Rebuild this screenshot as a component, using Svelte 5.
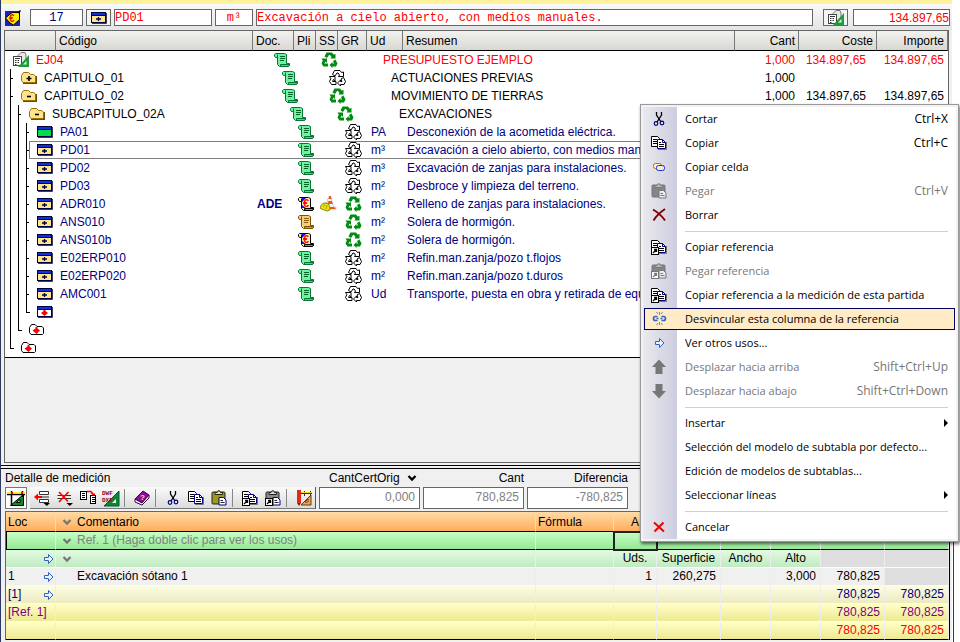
<script lang="ts">
	type Row = {
		level: number;
		icon: string;
		code?: string;
		doc?: string;
		pli?: string;
		ss?: string;
		gr?: string;
		ud?: string;
		text?: string;
		nums?: string[];
	};

	const scroll = (fill: string, roll: string, stroke: string, extra: string) =>
		`<g transform="translate(0 1)"><path d="M1.5 .5H10.5L12.5 1.5V10.5H15.5V12.5L14 13.5H5.5L3.5 11.5V4.5H1.5L.5 3V1.5Z" fill="${fill}" stroke="${stroke}"/>
		<path d="M6.5 13.5V11.5H15.5V12.5L14 13.5Z" fill="${roll}" stroke="${stroke}"/><path d="M3.5 1.5V4.5" stroke="${stroke}"/>${extra}</g>`;

	const lines = (color: string) => `<path d="M6 3.5H11M6 5.5H11M6 7.5H10" stroke="${color}"/>`;

	const recycle = (fill: string, stroke: string) =>
		`<g fill="${fill}" stroke="${stroke}"><path d="M3.5 4.5L5.5 .5H11L12.5 2.5L14.5 2V6.5H9.5L10.5 5L9 3H8L6 6Z"/>
		<path d="M.5 6.5H6V11L4.5 9.5L3.5 11.5H7V14.5H2.5L.5 11.5L1.8 8.5Z"/>
		<path d="M12 9L14.5 7.5L16.5 11.5L15 14.5H11.5V16L8.5 13L11.5 10V11.5H13Z"/></g>`;

	const folder = (sign: string) =>
		`<path d="M2 13H15V6" fill="none" stroke="#6b4d00" stroke-width="2"/><path d="M.5 10.5V5.5L2.5 2.5H7.5L9.5 4.5H12.5L14.5 6V12L13.5 12.5H2Z" fill="#fde58d" stroke="#a27000"/><path d="${sign}" stroke="#000" stroke-width="1.6"/>`;

	const win = (body: string, mark: string) =>
		`<path d="M1 13.5H15.5V3" fill="none" stroke="#3b3b60"/><rect x=".5" y="2.5" width="14" height="10" fill="${body}" stroke="#00003c"/>
		<rect x="1" y="3" width="13" height="3" fill="#0a34e0"/><path d="M1 5.5H14" stroke="#000070"/>${mark}`;

	const pages =
		'<path d="M.5 1.5H6.5L8.5 3.5V11.5H.5Z" fill="#fff" stroke="#000"/><path d="M2 4.5H6M2 6.5H6M2 8.5H6" stroke="#000"/><path d="M7 14.5H15.5V7" fill="none" stroke="#777"/><path d="M6.5 4.5H11.5L14.5 7.5V13.5H6.5Z" fill="#fff" stroke="#000080"/><path d="M11.5 4.5V7.5H14.5" fill="none" stroke="#000080"/><path d="M8 7.5H10M8 9.5H13M8 11.5H13" stroke="#000"/>';
	const clip = (board: string, metal: string, ink: string, page: string) =>
		`<rect x="1" y="2" width="13" height="12" rx="1" fill="${board}" stroke="${ink}"/><path d="M4 4.5V2.5H6L7 .8H8.5L9.5 2.5H11.5V4.5Z" fill="${metal}" stroke="${ink}"/>
		<path d="M8 7.5H12.5L15 10V15H8Z" fill="${page}" stroke="${ink === '#777' ? '#777' : '#000080'}"/><path d="M9.5 10.5H12M9.5 12.5H13.5" stroke="${ink}"/>`;
	const shortcut = (ink: string) =>
		`<rect x=".5" y="8.5" width="7" height="7" fill="#fff" stroke="${ink}"/><path d="M2 14L5.5 10.5M3 10.5H5.5V13" fill="none" stroke="${ink}" stroke-width="1.3"/>`;

	const icons: { [key: string]: string } = {
		scroll: scroll('#6df59d', '#58d158', '#057535', lines('#046328')),
		tan: scroll('#f3cf7d', '#c99a3d', '#7d5200', lines('#8a5d0b')),
		euro: scroll(
			'#fff2a8',
			'#a99b20',
			'#000',
			'<path d="M4 1H8L4 5ZM4 8V11H8Z" fill="#1111e0"/><text x="5" y="10" font-size="11" font-weight="700" font-family="Liberation Sans, sans-serif" fill="#f00">€</text>'
		),
		helmet:
			'<path d="M8 2H11L13.5 11H16V13H6V11Z" fill="#f4f4f4" stroke="#999" stroke-width=".5"/><path d="M9 0H11L11.6 3H8.6ZM8.4 5H12L12.7 8H7.7ZM6 11H14L16 13H6Z" fill="#f05a10"/><path d="M.5 12.5C0 9 3 6.500 6 7C9 7.500 10 10 10 14L7 15Z" fill="#ece414" stroke="#8f8600"/><path d="M3 11L5 8M6 13L7 9" stroke="#a39b00"/>',
		recycle: recycle('#008c10', 'none'),
		recycleOff: recycle('#fff', '#000'),
		plus: folder('M5.500 8.500H10.500M8 6V11'),
		minus: folder('M6 8.500H10'),
		item: win('#ffe48c', '<path d="M5 9H10M7.500 7V11" stroke="#000040" stroke-width="1.300"/>'),
		green: win('#00dc4c', ''),
		newItem: win('#fff', '<path d="M4 9L6.500 7V6H8.500V7L11 9L7.500 12Z" fill="#f00"/>'),
		newFolder:
			'<path d="M.5 10.500V5.500L2.500 2.500H6L8 4.500H13L14.500 6V11.500L13.500 12.500H2Z" fill="#fff" stroke="#000"/><path d="M3.500 8.500L6.500 6.500V5H8.500V6.500L11 8.500L7.500 12Z" fill="#f00"/>',
		calc: '<path d="M5 3.500L8 .5H12L13 3V11H5Z" fill="#e8e8e8" stroke="#777"/><rect x=".5" y="4.500" width="8" height="9" fill="#fff" stroke="#444"/><path d="M2 6.500H7M2 8.500H3.500M4.500 8.500H6M2 10.500H3.500M4.500 10.500H6M2 12.500H3.500" stroke="#333"/><path d="M16 3V15H5Z" fill="#1e9b3c"/><path d="M13.500 9V12.500H10Z" fill="#e6f5e6"/>',
		tag: '<rect y="1" width="15" height="15" fill="#1a20b8"/><path d="M.5 8L7 2.500H14.500V9.500L8.500 15L5 13Z" fill="#ffee00" stroke="#000"/><path d="M13 3L15.500 .5" stroke="#000" stroke-width="1.500"/><text x="4" y="12" font-size="10" font-weight="700" font-family="Liberation Sans, sans-serif" fill="#e02000">€</text>',
		cut: '<path d="M5.500 1V4L10 11M10.500 1V4L6 11" fill="none" stroke="#000" stroke-width="1.300"/><circle cx="5" cy="12.500" r="1.800" fill="none" stroke="#000080" stroke-width="1.200"/><circle cx="11" cy="12" r="1.800" fill="none" stroke="#000080" stroke-width="1.200"/>',
		copy: pages,
		cell: '<rect x="2.500" y="4.500" width="8" height="5" rx="2" fill="#fff4d0" stroke="#a97500"/><rect x="5.500" y="6.500" width="8" height="5" rx="2" fill="#fbe6dc" stroke="#1030d8"/>',
		paste: clip('#9c9a1c', '#f4e56c', '#222', '#fff'),
		pasteOff: clip('#858585', '#b9b9b9', '#777', '#ececf2'),
		pasteGrey: clip('#8a8a86', '#d8d8d0', '#222', '#fff') + shortcut('#000'),
		remove: '<path d="M2 2.500C7 5.500 11 9 14 13.500M14 2C9 5.500 5 9 2.500 13.500" fill="none" stroke="#800000" stroke-width="1.900"/>',
		copyRef: pages + shortcut('#000'),
		pasteRefOff: clip('#858585', '#b9b9b9', '#777', '#ececf2') + shortcut('#777'),
		unlink:
			'<path d="M6.500 5.500H4.500Q2.500 5.500 2.500 7.500T4.500 9.500H6.500M10.500 5.500H12.500Q14.500 5.500 14.500 7.500T12.500 9.500H10.500M5.500 7.500H7.500M9.500 7.500H11.500" fill="none" stroke="#2f66c8" stroke-width="1.700"/><path d="M8.500 1V4M5.500 1L7 3M11.500 1L10 3M8.500 11V14M5.500 14L7 12M11.500 14L10 12" stroke="#888"/>',
		next: '<path d="M4.500 6.500H8.500V3.500L13 8L8.500 12.500V9.500H4.500Z" fill="#eef4ff" stroke="#2f62c4"/>',
		up: '<path d="M8 .5L15 8H11.500V15H4.500V8H1Z" fill="#777"/>',
		down: '<path d="M8 15.500L15 8H11.500V1H4.500V8H1Z" fill="#777"/>',
		cancel: '<path d="M3 3.500L13 12.500M12.500 3.500L3.500 12.500" stroke="#f00000" stroke-width="2"/>',
		insertRow:
			'<path d="M5.500 1.500H14.500V4.500H5.500ZM5.500 9.500H14.500V12.500H5.500Z" fill="#fff" stroke="#333"/><path d="M7 7H15" stroke="#333"/><path d="M0 7L4 3.500V6H8V8H4V10.500Z" fill="#f00"/><path d="M9.500 13H16L12.800 16Z" fill="#000"/>',
		deleteRow:
			'<path d="M.5 5.500H14M.5 8.500H14" stroke="#333"/><path d="M2 2L11 11.500M11.500 2L2 12" stroke="#f00" stroke-width="1.600"/><path d="M9.500 13H16L12.800 16Z" fill="#000"/>',
		moveRow:
			'<rect x=".5" y="1.500" width="6" height="8" fill="#fff" stroke="#000"/><path d="M2 3.500H5M2 5.500H5M2 7.500H5" stroke="#000"/><rect x="10.500" y="5.500" width="5" height="8" fill="#fff" stroke="#000"/><path d="M12 7.500H15M12 9.500H15M12 11.500H15" stroke="#000"/><path d="M7 1.500H11L13 4" fill="none" stroke="#f00" stroke-width="1.500"/><path d="M10 3.500H15V6Z" fill="#f00"/>',
		dwf: '<path d="M16 1V16H1Z" fill="#078c2c" stroke="#054"/><path d="M13 9V13H9Z" fill="#fff"/><text x="-1" y="5" font-size="6" font-weight="700" font-family="Liberation Mono, monospace" fill="#900020">DWF</text><text x="-1" y="12" font-size="6" font-weight="700" font-family="Liberation Mono, monospace" fill="#900020">DXF</text>',
		book: '<path d="M1 9L9 1L15 5L8 13Z" fill="#8a0d9b" stroke="#3a0045"/><path d="M1 9L8 13L15 5V8L8 15L1 12Z" fill="#fff" stroke="#3a0045"/><text x="6" y="10" font-size="8" font-weight="700" font-family="Liberation Sans, sans-serif" fill="#ffe600">?</text>',
		ruler:
			'<path d="M15 5V15H5Z" fill="#e5a462" stroke="#6b3800"/><path d="M12 9V12H9Z" fill="#fff" stroke="#6b3800"/><path d="M5 3.500H16M8.500 1V6M14.500 1V6" stroke="#333"/><rect x="1" y="0" width="4" height="13" fill="#e02a1c"/><path d="M1 13H5L3 16Z" fill="#8c1a10"/><path d="M5 2.500H16" stroke="#ffd400"/>',
		chevron: '<path d="M4.500 6L8 9.500L11.500 6" fill="none" stroke="currentColor" stroke-width="2.300"/>',
		square:
			'<path d="M17.500 5.500V16.500H4.500Z" fill="#0c8a22" stroke="#000"/><path d="M14 10.500V13.500H10.500Z" fill="#fff" stroke="#000"/><path d="M1 5.500H19M5.500 2V16M16.500 2V8" stroke="#000" stroke-width="1.500"/><path d="M1 4H19" stroke="#ffe600" stroke-width="1.500"/><path d="M5 4H7M15 4H17" stroke="#f00" stroke-width="2"/>'
	};

	const total = '134.897,65';

	const items: [string, string, string, string, string?][] = [
		['PA01', 'scroll', 'PA', 'Desconexión de la acometida eléctrica.'],
		['PD01', 'scroll', 'm³', 'Excavación a cielo abierto, con medios manuales.'],
		['PD02', 'scroll', 'm³', 'Excavación de zanjas para instalaciones.'],
		['PD03', 'scroll', 'm²', 'Desbroce y limpieza del terreno.'],
		['ADR010', 'euro', 'm³', 'Relleno de zanjas para instalaciones.', 'recycle'],
		['ANS010', 'tan', 'm²', 'Solera de hormigón.', 'recycle'],
		['ANS010b', 'euro', 'm²', 'Solera de hormigón.', 'recycle'],
		['E02ERP010', 'scroll', 'm²', 'Refin.man.zanja/pozo t.flojos'],
		['E02ERP020', 'scroll', 'm²', 'Refin.man.zanja/pozo t.duros'],
		['AMC001', 'scroll', 'Ud', 'Transporte, puesta en obra y retirada de equipo']
	];

	const rows: Row[] = [
		{ level: 0, icon: 'calc', code: 'EJ04', pli: 'scroll', gr: 'recycle', text: 'PRESUPUESTO EJEMPLO', nums: ['1,000', total, total] },
		{ level: 1, icon: 'plus', code: 'CAPITULO_01', pli: 'scroll', gr: 'recycleOff', text: 'ACTUACIONES PREVIAS', nums: ['1,000'] },
		{ level: 1, icon: 'minus', code: 'CAPITULO_02', pli: 'scroll', gr: 'recycle', text: 'MOVIMIENTO DE TIERRAS', nums: ['1,000', total, total] },
		{ level: 2, icon: 'minus', code: 'SUBCAPITULO_02A', pli: 'scroll', gr: 'recycle', text: 'EXCAVACIONES' },
		...items.map(([code, pli, ud, text, gr]) => ({
			level: 3,
			icon: code === 'PA01' ? 'green' : 'item',
			code,
			pli,
			ud,
			text,
			gr: gr ?? 'recycleOff',
			doc: code === 'ADR010' ? 'ADE' : '',
			ss: code === 'ADR010' ? 'helmet' : ''
		})),
		{ level: 3, icon: 'newItem' },
		{ level: 2, icon: 'newFolder' },
		{ level: 1, icon: 'newFolder' }
	];

	const menu: { label?: string; icon?: string; keys?: string; off?: boolean; sub?: boolean }[] = [
		{ label: 'Cortar', icon: 'cut', keys: 'Ctrl+X' },
		{ label: 'Copiar', icon: 'copy', keys: 'Ctrl+C' },
		{ label: 'Copiar celda', icon: 'cell' },
		{ label: 'Pegar', icon: 'pasteOff', keys: 'Ctrl+V', off: true },
		{ label: 'Borrar', icon: 'remove' },
		{},
		{ label: 'Copiar referencia', icon: 'copyRef' },
		{ label: 'Pegar referencia', icon: 'pasteRefOff', off: true },
		{ label: 'Copiar referencia a la medición de esta partida', icon: 'copyRef' },
		{ label: 'Desvincular esta columna de la referencia', icon: 'unlink' },
		{ label: 'Ver otros usos...', icon: 'next' },
		{ label: 'Desplazar hacia arriba', icon: 'up', keys: 'Shift+Ctrl+Up', off: true },
		{ label: 'Desplazar hacia abajo', icon: 'down', keys: 'Shift+Ctrl+Down', off: true },
		{},
		{ label: 'Insertar', sub: true },
		{ label: 'Selección del modelo de subtabla por defecto...' },
		{ label: 'Edición de modelos de subtablas...' },
		{ label: 'Seleccionar líneas', sub: true },
		{},
		{ label: 'Cancelar', icon: 'cancel' }
	];

	const tools = [
		'insertRow', 'deleteRow', 'moveRow', 'dwf', '',
		'book', '',
		'cut', 'copy', 'paste', '',
		'copyRef', 'pasteGrey', '',
		'ruler'
	];

	// empty strings are blank cells, columns run from Fórmula to the right
	const measures = [
		{ cls: 'ref', loc: '', text: 'Ref. 1 (Haga doble clic para ver los usos)', chevron: true, cells: ['', '', '', '', '', '', ''] },
		{ cls: 'titles', loc: '', text: '', arrow: true, chevron: true, cells: ['', 'Uds.', 'Superficie', 'Ancho', 'Alto', '', ''] },
		{ cls: 'line', loc: '1', text: 'Excavación sótano 1', arrow: true, cells: ['', '1', '260,275', '', '3,000', '780,825', ''] },
		{ cls: 'sub navy', loc: '[1]', text: '', arrow: true, cells: ['', '', '', '', '', '780,825', '780,825'] },
		{ cls: 'sum purple', loc: '[Ref. 1]', text: '', cells: ['', '', '', '', '', '780,825', '780,825'] },
		{ cls: 'sum red', loc: '', text: '', cells: ['', '', '', '', '', '780,825', '780,825'] }
	];

	let selected = $state('PD01');
	let active = $state('Desvincular esta columna de la referencia');
</script>

{#snippet icon(name: string)}
	<svg class="icon" viewBox="0 0 16 16" width="16" height="16" fill="none" aria-hidden="true">{@html icons[name]}</svg>
{/snippet}

<div class="window">
	<div class="strip"></div>
	<div class="editbar">
		<span class="tag">{@render icon('tag')}</span>
		<input class="num" aria-label="Línea" value="17" />
		<button aria-label="Tipo">{@render icon('item')}</button>
		<input class="code" aria-label="Código" value="PD01" />
		<input class="unit" aria-label="Unidad" value="m³" />
		<input class="summary" aria-label="Resumen" value="Excavación a cielo abierto, con medios manuales." />
		<button class="budget" aria-label="Presupuesto">{@render icon('calc')}</button>
		<input class="total" aria-label="Total" value={total} />
	</div>

	<div class="grid">
		<table class="tree">
			<colgroup>
				<col class="w-tree" /><col class="w-code" /><col class="w-doc" /><col class="w-pli" /><col class="w-pli" />
				<col class="w-gr" /><col class="w-ud" /><col /><col class="w-cant" /><col class="w-coste" /><col class="w-importe" />
			</colgroup>
			<thead>
				<tr>
					<th></th><th>Código</th><th>Doc.</th><th>Pli</th><th>SS</th><th>GR</th><th>Ud</th><th>Resumen</th>
					<th class="right">Cant</th><th class="right">Coste</th><th class="right">Importe</th>
				</tr>
			</thead>
			<tbody>
				{#each rows as row}
					<tr class="l{row.level}" class:selected={row.code === selected} onclick={() => row.code && (selected = row.code)}>
						<td colspan="2" class="node">
							<div class="branch">
								{#each { length: row.level } as _, i}
									<span class="guide" class:tick={i === row.level - 1} class:end={i === row.level - 1 && !row.code}></span>
								{/each}
								<span class="name">{@render icon(row.icon)}{row.code ?? ''}</span>
							</div>
						</td>
						<td class="doc">{row.doc ?? ''}</td>
						<td class="pli">{#if row.pli}<span class="shift">{@render icon(row.pli)}</span>{/if}</td>
						<td class="ss">{#if row.ss}{@render icon(row.ss)}{/if}</td>
						<td class="gr">{#if row.gr}<span class="shift">{@render icon(row.gr)}</span>{/if}</td>
						<td>{row.ud ?? ''}</td>
						<td><span class="shift">{row.text ?? ''}</span></td>
						<td class="right">{row.nums?.[0] ?? ''}</td>
						<td class="right cost">{row.nums?.[1] ?? ''}</td>
						<td class="right">{row.nums?.[2] ?? ''}</td>
					</tr>
				{/each}
			</tbody>
		</table>
	</div>

	<div class="splitter"></div>

	<div class="detail">
		<div class="head">
			<div class="left">
				<span class="title">Detalle de medición</span>
				<div class="toolbar">
					<button class="pressed" aria-label="Medición">
						<svg class="icon" viewBox="0 0 20 18" width="20" height="18" fill="none" aria-hidden="true">{@html icons.square}</svg>
					</button>
					<div class="tools">
						{#each tools as tool}
							{#if tool}
								<button aria-label={tool}>{@render icon(tool)}</button>
							{:else}
								<span class="sep"></span>
							{/if}
						{/each}
					</div>
				</div>
			</div>
			<div class="field">
				<div class="label">
					<select aria-label="Columna"><option>CantCertOrig</option></select>
					{@render icon('chevron')}
				</div>
				<input aria-label="CantCertOrig" value="0,000" />
			</div>
			<div class="field">
				<label class="label" for="cant">Cant</label>
				<input id="cant" value="780,825" />
			</div>
			<div class="field">
				<label class="label" for="dif">Diferencia</label>
				<input id="dif" value="-780,825" />
			</div>
		</div>

		<table class="measure">
			<colgroup>
				<col class="w-loc" /><col /><col class="w-formula" /><col class="w-a" /><col class="w-qty" />
				<col class="w-dim" /><col class="w-dim" /><col class="w-qty" /><col class="w-qty" />
			</colgroup>
			<thead>
				<tr>
					<th>Loc</th>
					<th><span class="comment">{@render icon('chevron')}Comentario</span></th>
					<th>Fórmula</th><th class="center">A</th><th></th><th></th><th></th><th></th><th></th>
				</tr>
			</thead>
			<tbody>
				{#each measures as m}
					<tr class={m.cls}>
						<td><span class="loc">{m.loc}{#if m.arrow}{@render icon('next')}{/if}</span></td>
						<td><span class="comment">{#if m.chevron}{@render icon('chevron')}{:else}<i></i>{/if}{m.text}</span></td>
						{#each m.cells as cell}
							<td class="right">{cell}</td>
						{/each}
					</tr>
				{/each}
			</tbody>
		</table>
	</div>

	<div class="menu" role="menu">
		{#each menu as entry}
			{#if entry.label}
				<button
					role="menuitem"
					class:active={entry.label === active}
					disabled={entry.off}
					onmouseenter={() => (active = entry.label ?? '')}
				>
					<span class="pic">{#if entry.icon}{@render icon(entry.icon)}{/if}</span>
					<span class="text">{entry.label}</span>
					{#if entry.keys}<span class="keys">{entry.keys}</span>{/if}
					{#if entry.sub}<span class="more"></span>{/if}
				</button>
			{:else}
				<div class="rule" role="separator"></div>
			{/if}
		{/each}
	</div>
</div>

<style>
	:global(body) {
		margin: 0;
		background: #fff;
	}

	.window {
		position: relative;
		display: flex;
		flex-direction: column;
		min-height: 100vh;
		box-sizing: border-box;
		padding-right: 8px;
		border-left: 1px solid #2c3a63;
		background: linear-gradient(to left, #fff 8px, #f0f0f0 8px);
		font: 12px/18px 'Liberation Sans', Arial, sans-serif;
		color: #000;
	}

	button,
	input,
	select {
		font: inherit;
		color: inherit;
		box-sizing: border-box;
		margin: 0;
		padding: 0;
		border-radius: 0;
	}

	.icon {
		flex: none;
		display: block;
		overflow: visible;
	}

	.right {
		text-align: right;
	}

	.center {
		text-align: center;
	}

	.strip {
		height: 4px;
		background: #fff29d;
	}

	/* edit bar */
	.editbar {
		display: flex;
		align-items: center;
		gap: 3px;
		padding: 5px 2px 4px 4px;
		background: linear-gradient(#fafafa, #e4e4e4);
		color: #f00;
	}

	.editbar input,
	.editbar button {
		height: 17px;
		border: 1px solid #666;
		background: #fff;
		font: 12px/15px 'Liberation Mono', 'Courier New', monospace;
	}

	.editbar button {
		flex: none;
		display: flex;
		justify-content: center;
		align-items: center;
		width: 25px;
		background: #f4f4f4;
	}

	.tag {
		margin-right: 6px;
	}

	.editbar .num {
		width: 53px;
		text-align: center;
		color: #000080;
	}

	.editbar .code {
		width: 98px;
	}

	.editbar .unit {
		width: 38px;
		text-align: center;
	}

	.editbar .summary {
		flex: 1;
		min-width: 0;
	}

	.editbar .budget {
		margin: 0 2px 0 7px;
	}

	.editbar .total {
		width: 97px;
		text-align: right;
		font-family: 'Liberation Sans', Arial, sans-serif;
	}

	/* budget tree */
	table {
		width: 100%;
		table-layout: fixed;
		border-collapse: separate;
		border-spacing: 0;
	}

	th,
	td {
		box-sizing: border-box;
		height: 18px;
		padding: 0 4px;
		font-weight: normal;
		white-space: nowrap;
	}

	th:not(.right):not(.center) {
		text-align: left;
	}

	.grid {
		flex: 1;
		margin: 0 3px;
		border: 1px solid #666;
	}

	.tree tbody {
		background: #fff;
	}

	.tree {
		border-bottom: 1px solid #000;
	}

	.tree th {
		height: 20px;
		padding: 0 3px;
		border-right: 1px solid #777;
		border-bottom: 1px solid #000;
		background: linear-gradient(#f2f2f0, #d8d7d2);
	}

	.w-tree { width: 51px; }
	.w-code { width: 197px; }
	.w-doc { width: 41px; }
	.w-pli { width: 22px; }
	.w-gr { width: 29px; }
	.w-ud { width: 36px; }
	.w-cant { width: 64px; }
	.w-coste { width: 78px; }
	.w-importe { width: 71px; }

	.l0 {
		color: #f00;
	}

	.l3 {
		color: #000080;
	}

	.shift {
		display: block;
	}

	.l0 .shift { margin-left: -24px; }
	.l1 .shift { margin-left: -16px; }
	.l2 .shift { margin-left: -8px; }

	.tree .node {
		padding: 0 0 0 5px;
	}

	.branch {
		display: flex;
		height: 18px;
	}

	.guide {
		flex: none;
		width: 8px;
		box-sizing: border-box;
		background: linear-gradient(#000, #000) 0 0 / 1px 100% no-repeat;
	}

	.tick {
		background:
			linear-gradient(#000, #000) 0 0 / 1px 100% no-repeat,
			linear-gradient(#000, #000) 0 9px / 3px 1px no-repeat;
	}

	.end {
		background:
			linear-gradient(#000, #000) 0 0 / 1px 10px no-repeat,
			linear-gradient(#000, #000) 0 9px / 4px 1px no-repeat;
	}

	.name {
		flex: 1;
		display: flex;
		align-items: center;
		gap: 7px;
		padding-left: 3px;
	}

	.l3 .name {
		margin-left: -5px;
		padding-left: 8px;
	}

	.selected .name {
		box-shadow: inset 1px 1px #808080, inset 0 -1px #808080;
	}

	.selected td:not(.node) {
		box-shadow: inset 0 1px #808080, inset 0 -1px #808080;
	}

	.doc {
		font-weight: bold;
	}

	.tree .gr {
		padding: 0 0 0 7px;
	}

	.tree .ss {
		padding: 0 0 0 4px;
	}

	.tree .cost {
		padding-right: 11px;
	}

	.splitter {
		height: 2px;
		margin-top: 2px;
		border: solid #000;
		border-width: 1px 0;
	}

	/* measurement detail */
	.detail {
		padding: 0 3px 2px 4px;
		border-right: 1px solid #2c3a63;
		margin-right: -2px;
	}

	.head {
		display: flex;
		gap: 3px;
		margin-bottom: 2px;
	}

	.title,
	.label {
		display: flex;
		justify-content: flex-end;
		align-items: center;
		height: 18px;
	}

	.label {
		gap: 4px;
	}

	.title {
		justify-content: flex-start;
	}

	.toolbar {
		display: flex;
		gap: 3px;
	}

	.toolbar button {
		display: flex;
		justify-content: center;
		align-items: center;
		width: 23px;
		height: 21px;
		border: 0;
		background: none;
	}

	.toolbar .pressed {
		width: 22px;
		height: 22px;
		border: 1px solid #777;
		background: #fff;
	}

	.tools {
		display: flex;
		border-right: 1px solid #555;
		border-bottom: 1px solid #777;
		background: linear-gradient(#fafafa, #dcdcdc);
	}

	.sep {
		width: 8px;
		background: linear-gradient(#888, #888) 2px 2px / 1px 18px no-repeat;
	}

	.field {
		width: 101px;
	}

	.field input {
		width: 100%;
		height: 22px;
		padding: 0 4px 3px;
		border: 1px solid #666;
		background: #fff;
		text-align: right;
		color: #808080;
	}

	select {
		appearance: none;
		border: 0;
		background: none;
	}

	.measure {
		border: 1px solid #666;
		border-bottom: 0;
		border-right-color: #000;
	}

	.w-loc { width: 50px; }
	.w-formula { width: 78px; }
	.w-a { width: 43px; }
	.w-qty { width: 64px; }
	.w-dim { width: 50px; }

	.measure th {
		height: 20px;
		padding: 0 2px;
		border-right: 1px solid #ffd99c;
		border-bottom: 1px solid #000;
		background: linear-gradient(#ffdca6, #ffad5b);
	}

	.measure td {
		padding: 0 4px 0 2px;
		border-right: 1px solid #ededed;
		border-bottom: 1px solid #fafafa;
		line-height: 17px;
	}

	.loc {
		display: flex;
		justify-content: space-between;
		align-items: center;
	}

	.measure .loc .icon {
		margin: 0 -5px 0 auto;
	}

	.comment {
		display: flex;
		align-items: center;
		gap: 2px;
	}

	.comment .icon {
		color: #777;
	}

	.comment i,
	.comment .icon {
		width: 16px;
		margin-left: 1px;
	}

	.ref {
		color: #808080;
	}

	.ref td {
		background: linear-gradient(#c6ffc6, #96e896);
		border-bottom-color: #000;
	}

	.ref td:first-child {
		box-shadow: inset 1px 0 #000;
	}

	.ref td:nth-child(4) {
		outline: 2px solid #222;
		outline-offset: -1px;
	}

	.titles td {
		background: linear-gradient(#e2fbe2, #c0ebc2);
	}

	.titles .right {
		padding: 0;
		text-align: center;
	}

	.line td {
		background: #f0f0f0;
	}

	.titles td:nth-child(n + 8),
	.line td:nth-child(9) {
		background: #dedede;
	}

	.sub td {
		background: linear-gradient(#fdfde2, #ebeac2);
	}

	.sum td {
		background: linear-gradient(#ffffc6, #edea92);
	}

	.measure tr:last-child td {
		border-bottom-color: #000;
	}

	.navy { color: #000080; }
	.purple { color: #800080; }
	.red { color: #f00; }

	/* context menu */
	.menu {
		position: absolute;
		top: 104px;
		right: 1px;
		width: 319px;
		box-sizing: border-box;
		padding: 2px 3px;
		border: 1px solid #999;
		background: linear-gradient(to right, #e9e9ee, #cdcde0) 2px 2px / 34px calc(100% - 4px) no-repeat, #fff;
		box-shadow: inset 0 0 0 2px #f2f2f2, 1px 2px 3px rgba(0, 0, 0, 0.6);
		font: 12px/16px 'Open Sans', 'Segoe UI', sans-serif;
		white-space: nowrap;
	}

	.menu button {
		display: flex;
		align-items: center;
		width: 100%;
		height: 24px;
		padding: 0 7px;
		border: solid transparent;
		border-width: 1px 0;
		background: none;
		text-align: left;
	}

	.menu button:disabled {
		color: #777;
	}

	.menu .active {
		background: #ffebc6;
		background-clip: padding-box;
		box-shadow: inset 0 0 0 1px #000060;
	}

	.pic {
		width: 34px;
	}

	.text {
		flex: 1;
		font-size: 11px;
	}

	.more {
		border: 4px solid transparent;
		border-left-color: #000;
		border-right: 0;
	}

	.rule {
		height: 1px;
		margin: 4px 7px 3px 41px;
		background: #cfcfdc;
	}
</style>
